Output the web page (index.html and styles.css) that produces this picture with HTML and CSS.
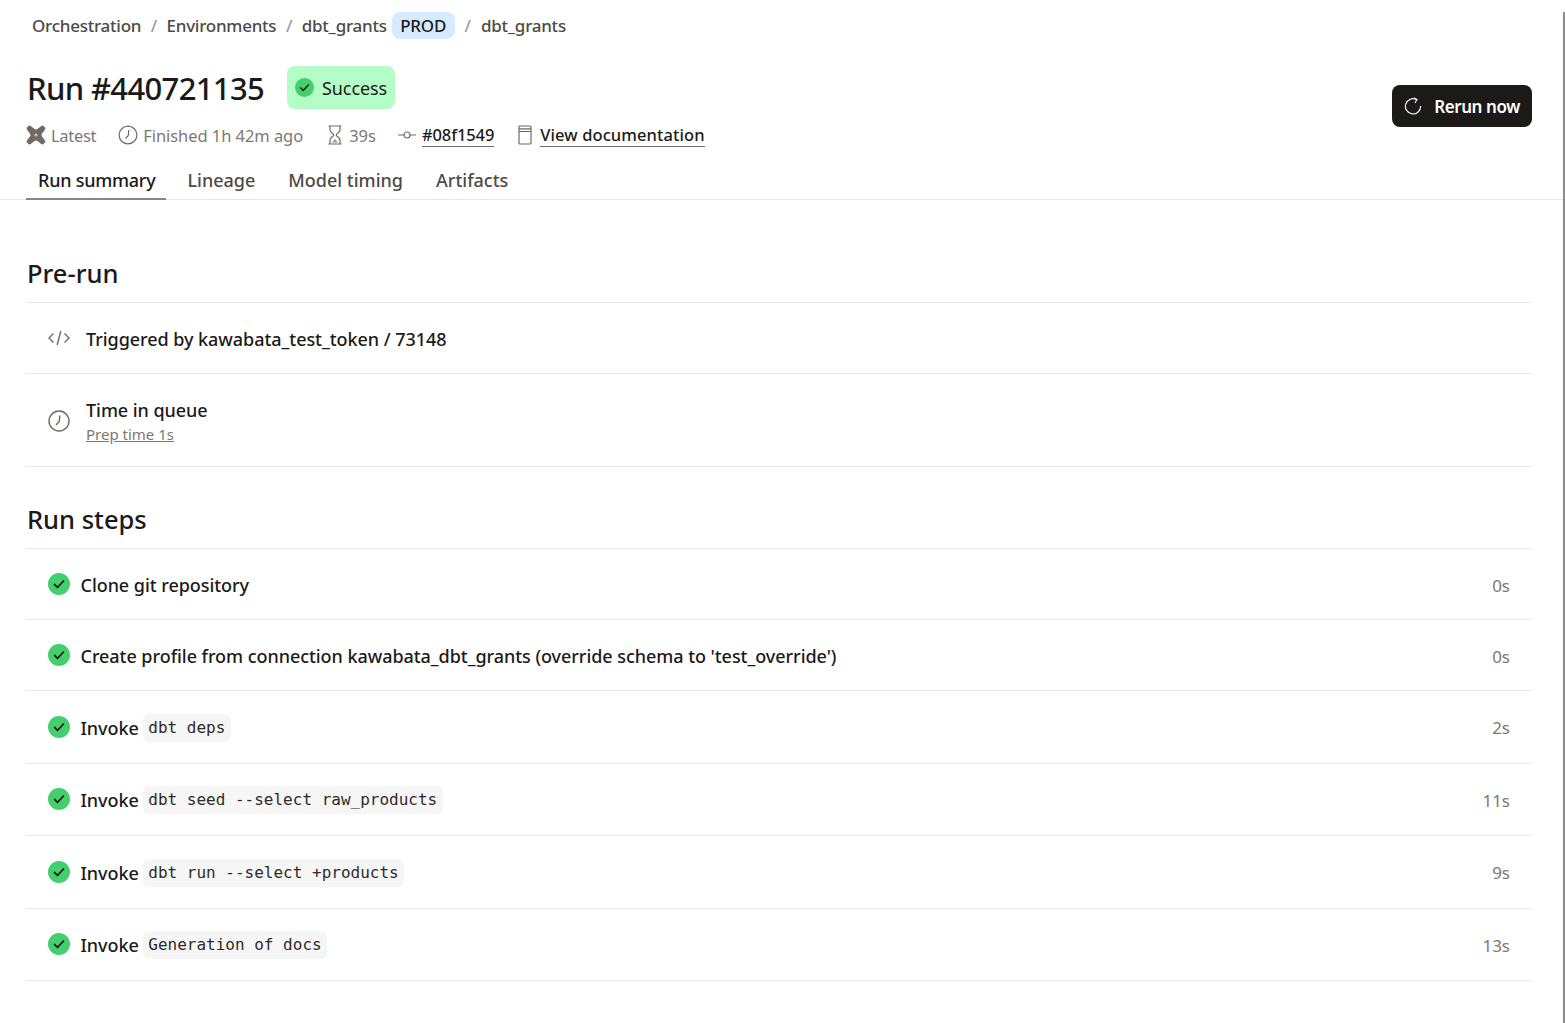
FILE: index.html
```html
<!DOCTYPE html>
<html lang="en">
<head>
    <meta charset="UTF-8">
    <meta name="viewport" content="width=device-width, initial-scale=1.0">
    <title>Run #440721135</title>
    <link rel="stylesheet" href="styles.css">
</head>
<body>
    <div class="page">
        <nav class="breadcrumb">
            <a>Orchestration</a><span class="sep">/</span>
            <a>Environments</a><span class="sep">/</span>
            <a>dbt_grants</a><span class="env-badge">PROD</span><span class="sep sep-wide">/</span>
            <a>dbt_grants</a>
        </nav>

        <header class="run-header">
            <div>
                <div class="title-line">
                    <h1>Run #440721135</h1>
                    <div class="status-pill">
                        <svg class="check-icon" viewBox="0 0 22 22"><circle cx="11" cy="11" r="11" fill="#44cf6e"/><path d="M6.5 11.4l3 3 6-6.4" fill="none" stroke="#1c1a19" stroke-width="1.7" stroke-linecap="round" stroke-linejoin="round"/></svg>
                        Success
                    </div>
                </div>
                <div class="meta-line">
                    <span class="meta meta-latest">
                        <svg width="20" height="20" viewBox="0 0 20 20"><path d="M0.500 3 3 0.500C6 1 8 4.500 10 4.500S14 1 17 0.500L19.500 3C19 6 15.500 8 15.500 10S19 14 19.500 17L17 19.500C14 19 12 15.500 10 15.500S6 19 3 19.500L0.500 17C1 14 4.500 12 4.500 10S1 6 0.500 3Z" fill="#6f6a66"/><circle cx="10" cy="10" r="1.600" fill="#c9c6c3"/></svg>
                        Latest
                    </span>
                    <span class="meta meta-finished">
                        <svg width="20" height="20" viewBox="0 0 20 20" fill="none" stroke="#6f6a66" stroke-width="1.200"><circle cx="10" cy="10" r="8.900"/><path d="M10.800 5 10.300 10.500 7.500 13.500"/></svg>
                        Finished 1h 42m ago
                    </span>
                    <span class="meta meta-duration">
                        <svg width="14" height="20" viewBox="0 0 14 20" fill="none" stroke="#6f6a66" stroke-width="1.200"><path d="M0.500 1H13.500M0.500 19H13.500M2 1V5C2 7.500 5.800 8.500 5.800 10C5.800 11.500 2 12.500 2 15V19M12 1V5C12 7.500 8.200 8.500 8.200 10C8.200 11.500 12 12.500 12 15V19"/><path d="M4 17.500 7 14 10 17.500Z" fill="#a09c98" stroke="none"/></svg>
                        39s
                    </span>
                    <span class="meta meta-commit">
                        <svg width="20" height="12" viewBox="0 0 20 12" fill="none" stroke="#6f6a66" stroke-width="1.200"><circle cx="10" cy="6" r="3"/><path d="M1 6H7M13 6H19"/></svg>
                        <a class="meta-link">#08f1549</a>
                    </span>
                    <span class="meta meta-docs">
                        <svg width="14" height="20" viewBox="0 0 14 20" fill="none" stroke="#6f6a66" stroke-width="1.200"><rect x="1" y="1" width="12" height="18" rx="1"/><path d="M1 3.800H13M1 6.500H13"/></svg>
                        <a class="meta-link">View documentation</a>
                    </span>
                </div>
            </div>
            <button class="rerun-button">
                <svg width="18" height="18" viewBox="0 0 18 18" fill="none" stroke="#e8e6e4" stroke-width="1.300"><path d="M12.500 2.600A7.600 7.600 0 1 0 16.600 9"/><path d="M9.800 0.800 13 2.800 10.800 5.800"/></svg>
                Rerun now
            </button>
        </header>

        <div class="tabs">
            <a class="tab tab-active">Run summary</a>
            <a class="tab">Lineage</a>
            <a class="tab">Model timing</a>
            <a class="tab">Artifacts</a>
        </div>

        <section class="section section-prerun">
            <h2>Pre-run</h2>
            <div class="row row-plain">
                <svg class="row-icon" width="22" height="22" viewBox="0 0 22 22" fill="none" stroke="#6f6a66" stroke-width="1.400"><path d="M5.500 6.500 1 11 5.500 15.500M16.500 6.500 21 11 16.500 15.500M12.800 4 9.200 18"/></svg>
                <div class="row-text">Triggered by kawabata_test_token / 73148</div>
            </div>
            <div class="row row-queue">
                <svg class="row-icon" width="22" height="22" viewBox="0 0 22 22" fill="none" stroke="#6f6a66" stroke-width="1.400"><circle cx="11" cy="11" r="10"/><path d="M11.800 5.500 11.300 11.500 8 15"/></svg>
                <div>
                    <div class="row-text">Time in queue</div>
                    <a class="prep-time">Prep time 1s</a>
                </div>
            </div>
        </section>

        <section class="section">
            <h2>Run steps</h2>
            <div class="row step">
                <svg class="check-icon" viewBox="0 0 22 22"><circle cx="11" cy="11" r="11" fill="#44cf6e"/><path d="M6.500 11.400l3 3 6-6.400" fill="none" stroke="#1c1a19" stroke-width="1.700" stroke-linecap="round" stroke-linejoin="round"/></svg>
                <div class="row-text">Clone git repository</div>
                <div class="step-time">0s</div>
            </div>
            <div class="row step">
                <svg class="check-icon" viewBox="0 0 22 22"><circle cx="11" cy="11" r="11" fill="#44cf6e"/><path d="M6.500 11.400l3 3 6-6.400" fill="none" stroke="#1c1a19" stroke-width="1.700" stroke-linecap="round" stroke-linejoin="round"/></svg>
                <div class="row-text">Create profile from connection kawabata_dbt_grants (override schema to 'test_override')</div>
                <div class="step-time">0s</div>
            </div>
            <div class="row step step-code">
                <svg class="check-icon" viewBox="0 0 22 22"><circle cx="11" cy="11" r="11" fill="#44cf6e"/><path d="M6.500 11.400l3 3 6-6.400" fill="none" stroke="#1c1a19" stroke-width="1.700" stroke-linecap="round" stroke-linejoin="round"/></svg>
                <div class="row-text">Invoke</div><code>dbt deps</code>
                <div class="step-time">2s</div>
            </div>
            <div class="row step step-code">
                <svg class="check-icon" viewBox="0 0 22 22"><circle cx="11" cy="11" r="11" fill="#44cf6e"/><path d="M6.500 11.400l3 3 6-6.400" fill="none" stroke="#1c1a19" stroke-width="1.700" stroke-linecap="round" stroke-linejoin="round"/></svg>
                <div class="row-text">Invoke</div><code>dbt seed --select raw_products</code>
                <div class="step-time">11s</div>
            </div>
            <div class="row step step-code">
                <svg class="check-icon" viewBox="0 0 22 22"><circle cx="11" cy="11" r="11" fill="#44cf6e"/><path d="M6.500 11.400l3 3 6-6.400" fill="none" stroke="#1c1a19" stroke-width="1.700" stroke-linecap="round" stroke-linejoin="round"/></svg>
                <div class="row-text">Invoke</div><code>dbt run --select +products</code>
                <div class="step-time">9s</div>
            </div>
            <div class="row step step-code">
                <svg class="check-icon" viewBox="0 0 22 22"><circle cx="11" cy="11" r="11" fill="#44cf6e"/><path d="M6.500 11.400l3 3 6-6.400" fill="none" stroke="#1c1a19" stroke-width="1.700" stroke-linecap="round" stroke-linejoin="round"/></svg>
                <div class="row-text">Invoke</div><code>Generation of docs</code>
                <div class="step-time">13s</div>
            </div>
        </section>
    </div>
</body>
</html>
```

FILE: styles.css
```css
* {
    box-sizing: border-box;
}

html, body {
    height: 100%;
}

body {
    margin: 0;
    background: #fff;
    color: #1c1a19;
    font-family: "Noto Sans", "Open Sans", sans-serif;
    font-size: 17px;
    overflow: hidden;
}

.page {
    height: 100%;
    border-right: 2px solid #8c8c8c;
}

.breadcrumb {
    display: flex;
    align-items: center;
    height: 26px;
    margin: 12px 0 0 32px;
    font-size: 17px;
    font-weight: 500;
    letter-spacing: -0.25px;
    color: #4d4a47;
}

.sep {
    margin: 0 9.500px;
    color: #a09c98;
}

.sep-wide {
    margin: 0 10px;
}

.env-badge {
    margin-left: 5px;
    padding: 0 8.500px;
    height: 27px;
    line-height: 27px;
    border-radius: 8px;
    background: #d6ebff;
    color: #1c1a19;
}

.run-header {
    display: flex;
    justify-content: space-between;
    align-items: center;
    margin: 28px 31px 0 26px;
}

.title-line {
    display: flex;
    align-items: center;
    height: 43px;
}

h1 {
    margin: 0 23px 0 1px;
    font-size: 31px;
    font-weight: 500;
    letter-spacing: -0.65px;
}

.status-pill {
    display: flex;
    align-items: center;
    gap: 8px;
    height: 43px;
    padding: 0 8px;
    border-radius: 8px;
    background: #b5fdc6;
    font-size: 18px;
    letter-spacing: -0.1px;
}

.check-icon {
    width: 22px;
    height: 22px;
    flex: none;
}

.status-pill .check-icon {
    width: 19px;
    height: 19px;
}

.meta-line {
    display: flex;
    align-items: center;
    height: 26px;
    margin-top: 13px;
    color: #7d7874;
    font-size: 16.500px;
}

.meta {
    display: flex;
    align-items: center;
    gap: 5px;
}

.meta-latest { margin-right: 22px; letter-spacing: -0.3px; }
.meta-finished { margin-right: 25px; letter-spacing: -0.06px; }
.meta-duration { margin-right: 21px; gap: 7px; }
.meta-commit { margin-right: 24px; letter-spacing: -0.1px; }
.meta-docs { gap: 8px; letter-spacing: 0.1px; }

.meta-link {
    color: #1c1a19;
    font-weight: 500;
    border-bottom: 1px solid #6f6a66;
}

.rerun-button {
    display: flex;
    align-items: center;
    gap: 12px;
    height: 42px;
    padding: 0 12px;
    margin-bottom: 2px;
    border: none;
    border-radius: 8px;
    background: #1c1a19;
    color: #fff;
    font-family: inherit;
    font-size: 17px;
    font-weight: 600;
    letter-spacing: -0.4px;
}

.tabs {
    display: flex;
    gap: 10px;
    height: 38px;
    margin-top: 14px;
    padding-left: 26px;
    border-bottom: 1px solid #e6e6e6;
}

.tab {
    height: 38px;
    padding: 6px 11px 0 12px;
    color: #4d4a47;
    font-size: 18px;
    font-weight: 500;
}

.tab-active {
    margin-right: -1px;
    color: #1c1a19;
    letter-spacing: -0.25px;
    border-bottom: 2px solid #8c8782;
}

.section {
    margin: 0 31px 0 26px;
}

.section-prerun {
    padding-top: 52px;
}

h2 {
    margin: 0;
    height: 50px;
    padding-left: 1px;
    font-size: 25.500px;
    font-weight: 500;
    line-height: 42px;
}

.section + .section {
    padding-top: 31px;
}

.row {
    display: flex;
    align-items: center;
    padding-left: 22px;
    border-top: 1px solid #e8e8e8;
}

.section .row:last-child {
    border-bottom: 1px solid #e8e8e8;
}

.row-plain {
    height: 71px;
}

.row-plain .row-text {
    padding-top: 2px;
}

.row-queue {
    height: 94px;
    padding-top: 1px;
}

.row-icon {
    margin-right: 16px;
    flex: none;
}

.row-text {
    font-size: 18px;
    font-weight: 500;
    letter-spacing: -0.05px;
}

.prep-time {
    display: block;
    width: fit-content;
    margin-top: 2px;
    font-size: 15px;
    color: #7d7874;
    text-decoration: underline;
}

.step {
    height: 71px;
    padding-right: 22px;
}

.step .row-text {
    margin-left: 10.500px;
    padding-top: 2px;
}

.step-code {
    height: 72.500px;
}

.section .step-code:last-child {
    height: 73.500px;
}

code {
    margin: 2px 0 0 4px;
    padding: 0 5.500px;
    height: 28px;
    line-height: 28px;
    border-radius: 6px;
    background: #f6f6f6;
    color: #2e2b29;
    font-family: "DejaVu Sans Mono", monospace;
    font-size: 16px;
}

.step-time {
    margin-left: auto;
    padding-top: 2px;
    color: #7d7874;
    font-size: 17px;
}
```
